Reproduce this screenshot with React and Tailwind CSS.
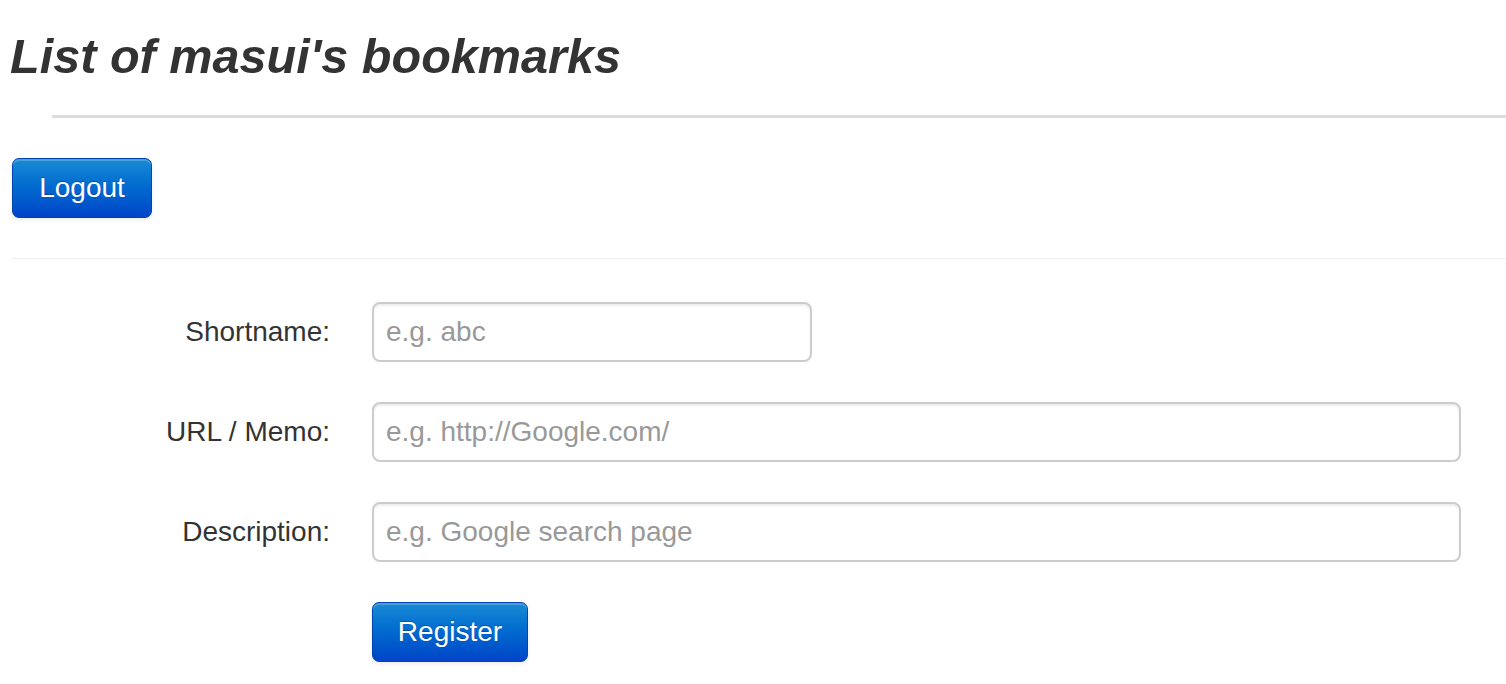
import React from "react";

const font = { fontFamily: '"Liberation Sans", Arial, Helvetica, sans-serif' };

function Btn({ children, className = "" }) {
  return (
    <button
      className={
        "h-[60px] rounded-[7px] border border-[#0044b0] text-white text-[28px] leading-none pb-[1px] flex items-center justify-center bg-gradient-to-b from-[#1a8ad4] to-[#0343c8] shadow-[inset_0_2px_0_rgba(255,255,255,0.2),0_2px_4px_rgba(0,0,0,0.08)] [text-shadow:0_-1px_0_rgba(0,0,0,0.25)] " +
        className
      }
    >
      {children}
    </button>
  );
}

function Row({ label, placeholder, width }) {
  return (
    <div className="flex items-center h-[60px] mb-[40px]">
      <label className="w-[318px] text-right text-[28px] text-[#333] leading-none">
        {label}
      </label>
      <input
        placeholder={placeholder}
        className={
          "ml-[42px] h-[60px] rounded-[8px] border-2 border-[#cccccc] bg-white px-[12px] text-[28px] text-[#555] placeholder:text-[#999] outline-none shadow-[inset_0_2px_2px_rgba(0,0,0,0.075)] " +
          width
        }
      />
    </div>
  );
}

export default function App() {
  return (
    <div style={font} className="w-[1506px] h-[684px] overflow-hidden bg-white">
      <h1 className="ml-[10px] pt-[28px] text-[48.6px] leading-[56px] font-bold italic text-[#333]">
        List of masui's bookmarks
      </h1>
      <div className="ml-[52px] mt-[31px] h-[3px] bg-[#dddddd]" />
      <div className="ml-[12px] mt-[40px]">
        <Btn className="w-[140px]">Logout</Btn>
      </div>
      <div className="ml-[12px] mt-[40px] h-[1px] bg-[#eeeeee]" />
      <div className="ml-[12px] mt-[43px]">
        <Row label="Shortname:" placeholder="e.g. abc" width="w-[440px]" />
        <Row label="URL / Memo:" placeholder="e.g. http://Google.com/" width="w-[1089px]" />
        <Row label="Description:" placeholder="e.g. Google search page" width="w-[1089px]" />
        <div className="ml-[360px]">
          <Btn className="w-[156px]">Register</Btn>
        </div>
      </div>
    </div>
  );
}
